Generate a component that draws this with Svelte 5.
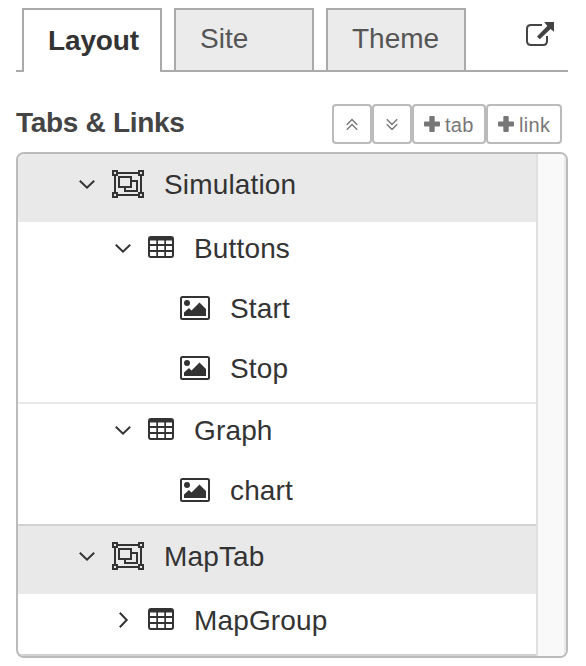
<script>
  const tabs = ['Layout', 'Site', 'Theme'];
  let active = $state('Layout');
  const tree = [
    {
      name: 'Simulation',
      groups: [
        { name: 'Buttons', open: true, items: ['Start', 'Stop'] },
        { name: 'Graph', open: true, items: ['chart'] }
      ]
    },
    { name: 'MapTab', groups: [{ name: 'MapGroup', open: false, items: [] }] }
  ];
</script>

{#snippet chevron(open)}
  <svg class="chevron" class:closed={!open} width="20" height="20" viewBox="0 0 20 20">
    <path d="M2.8 6.8 10 13.7 17.2 6.8" />
  </svg>
{/snippet}

{#snippet plus()}
  <svg width="16" height="16" viewBox="0 0 16 16">
    <path fill="#777" d="M6.3 0h3.4q1 0 1 1v4.400H15q1 0 1 1v3.200q0 1-1 1h-4.300V15q0 1-1 1H6.300q-1 0-1-1v-4.400H1q-1 0-1-1V6.400q0-1 1-1h4.300V1q0-1 1-1z" />
  </svg>
{/snippet}

<main>
  <nav>
    {#each tabs as tab}
      <button class="tab" class:active={tab === active} onclick={() => (active = tab)}>{tab}</button>
    {/each}
    <svg class="external" width="28" height="24" viewBox="0 0 28 24">
      <path fill="none" stroke="#444" stroke-width="2" d="M16 3H5Q1 3 1 7v12q0 4 4 4h12q4 0 4-4v-5" />
      <path fill="#444" d="M18.200 0H28v9.800L24.600 7 13.800 17.300 11 14.600 21.300 3.900z" />
    </svg>
  </nav>

  <header>
    <h2>Tabs &amp; Links</h2>
    <div class="tools">
      <button class="fold" aria-label="Collapse all">
        <svg width="12" height="12" viewBox="0 0 12 12"><path d="M.8 6.700 6 1.500l5.200 5.200M.8 11.700 6 6.500l5.200 5.200" /></svg>
      </button>
      <button class="fold" aria-label="Expand all">
        <svg width="12" height="12" viewBox="0 0 12 12"><path d="M.8 1.300 6 6.500 11.200 1.300M.8 6.300 6 11.500l5.200-5.200" /></svg>
      </button>
      <button class="add add-tab">{@render plus()}<span>tab</span></button>
      <button class="add add-link">{@render plus()}<span>link</span></button>
    </div>
  </header>

  <section class="panel">
    <div class="tree">
      {#each tree as page}
        <div class="page">
          <div class="row page-row">
            {@render chevron(true)}
            <svg class="icon" width="32" height="28" viewBox="0 0 32 28" fill="none" stroke="#333" stroke-width="2">
              <path d="M1 1h4v4H1zM27 1h4v4h-4zM1 23h4v4H1zM27 23h4v4h-4zM6 3h20M6 25h20M3 6v16M29 6v16" />
              <path d="M7 7h12v10H7zM20 11h5v10H13v-3" />
            </svg>
            <span class="label">{page.name}</span>
          </div>
          {#each page.groups as group}
            <div class="group">
              <div class="row group-row">
                {@render chevron(group.open)}
                <svg class="icon table" width="26" height="22" viewBox="0 0 26 22">
                  <path
                    fill="#333"
                    fill-rule="evenodd"
                    d="M3 0h20q3 0 3 3v16q0 3-3 3H3q-3 0-3-3V3q0-3 3-3zM2 4.500V8h6.300V4.500zM10 4.500V8h6.300V4.500zM18 4.500V8h6V4.500zM2 10v4h6.300v-4zM10 10v4h6.300v-4zM18 10v4h6v-4zM2 16v3.300q0 .7.7.7h5.600v-4zM10 16v4h6.300v-4zM18 16v4h5.300q.7 0 .7-.7V16z"
                  />
                </svg>
                <span class="label">{group.name}</span>
              </div>
              {#each group.items as item}
                <div class="row item-row">
                  <svg class="icon" width="30" height="24" viewBox="0 0 30 24">
                    <rect x="1" y="1" width="28" height="22" rx="1.500" fill="none" stroke="#333" stroke-width="2" />
                    <circle cx="7" cy="7" r="3" fill="#333" />
                    <path fill="#333" d="M4 20v-3.500L9 12l2.500 2.500L19.500 6.500 26 13v7z" />
                  </svg>
                  <span class="label">{item}</span>
                </div>
              {/each}
            </div>
          {/each}
        </div>
      {/each}
    </div>
    <div class="scrollbar"></div>
  </section>
</main>

<style>
  :global(body) {
    background: #fff;
  }
  main {
    width: 552px;
    padding: 8px 18px 8px 16px;
    font-family: 'Liberation Sans', Arial, sans-serif;
    font-size: 28px;
    color: #333;
  }
  button {
    margin: 0;
    box-sizing: border-box;
    font-family: inherit;
    background: #fff;
  }
  svg {
    display: block;
    flex: none;
  }
  nav {
    display: flex;
    gap: 12px;
    height: 64px;
    padding-left: 6px;
    box-sizing: border-box;
    background: linear-gradient(#aaa, #aaa) bottom / 100% 2px no-repeat;
  }
  .tab {
    width: 140px;
    height: 64px;
    padding: 0 0 2px 24px;
    border: 2px solid #aaa;
    background: #ebebeb;
    color: #555;
    font-size: 28px;
    line-height: 56px;
    text-align: left;
  }
  .tab.active {
    padding-top: 2px;
    border-bottom: 0;
    border-radius: 0 0 2px 2px;
    background: #fff;
    color: #333;
    font-weight: bold;
    letter-spacing: -0.15px;
  }
  .external {
    margin: 14px 0 0 48px;
  }
  header {
    display: flex;
    justify-content: space-between;
    height: 80px;
    padding: 32px 6px 8px 0;
    box-sizing: border-box;
  }
  h2 {
    margin: 0;
    font-size: 28px;
    line-height: 37px;
    letter-spacing: -0.3px;
    color: #444;
  }
  .tools {
    display: flex;
  }
  .tools button {
    display: flex;
    align-items: center;
    height: 40px;
    padding: 0;
    border: 2px solid #bbb;
    border-radius: 4px;
    color: #777;
    font-size: 20px;
  }
  .fold {
    width: 40px;
    justify-content: center;
  }
  .fold path {
    fill: none;
    stroke: #777;
    stroke-width: 1.4;
  }
  .tools .add {
    gap: 5px;
    padding-left: 10px;
  }
  .add span {
    padding-top: 2px;
    letter-spacing: 0.3px;
  }
  .add-tab {
    width: 74px;
  }
  .add-link {
    width: 76px;
  }
  .panel {
    display: flex;
    height: 506px;
    box-sizing: border-box;
    border: 2px solid #bbb;
    border-radius: 8px;
    overflow: hidden;
  }
  .tree {
    flex: 1;
  }
  .scrollbar {
    width: 30px;
    box-sizing: border-box;
    border-left: 2px solid #e0e0e0;
    border-right: 2px solid #e8e8e8;
    background: #f9f9f9;
  }
  .page {
    border-bottom: 2px solid #d2d2d2;
  }
  .group + .group {
    border-top: 2px solid #e8e8e8;
  }
  .row {
    display: flex;
    align-items: center;
    height: 60px;
    padding-bottom: 8px;
    box-sizing: border-box;
    line-height: 50px;
  }
  .page-row {
    height: 68px;
    padding: 4px 0 12px 59px;
    background: #e9e9e9;
  }
  .group-row {
    padding-left: 95px;
  }
  .item-row {
    padding-left: 162px;
  }
  .label {
    padding-top: 2px;
    letter-spacing: 0.15px;
  }
  .chevron {
    margin-right: 15px;
  }
  .chevron path {
    fill: none;
    stroke: #333;
    stroke-width: 2;
  }
  .chevron.closed {
    transform: rotate(-90deg);
  }
  .icon {
    margin-right: 20px;
  }
  .table {
    margin-top: -2px;
  }
</style>
